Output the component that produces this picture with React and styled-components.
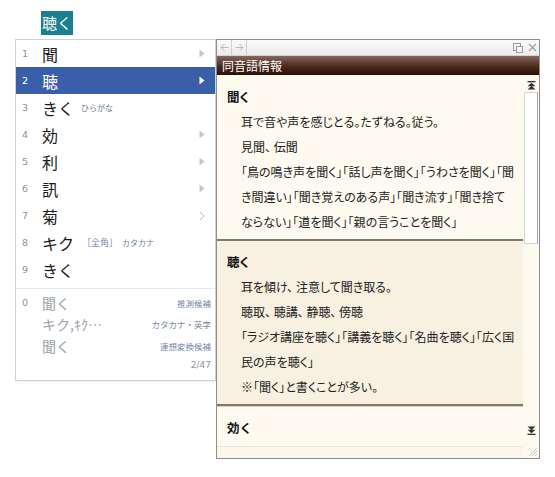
import styled, { createGlobalStyle } from "styled-components";

const GlobalStyle = createGlobalStyle`
  html, body {
    margin: 0;
    padding: 0;
    background: #fff;
  }
  body {
    font-family: "Noto Sans CJK JP", "Noto Sans", sans-serif;
    color: #222;
  }
`;

const candidates = [
  { num: 1, text: "聞", arrow: "solid" },
  { num: 2, text: "聴", arrow: "solid", selected: true },
  { num: 3, text: "きく", hint: "ひらがな" },
  { num: 4, text: "効", arrow: "solid" },
  { num: 5, text: "利", arrow: "solid" },
  { num: 6, text: "訊", arrow: "solid" },
  { num: 7, text: "菊", arrow: "open" },
  { num: 8, text: "キク", tag: "［全角］", hint: "カタカナ" },
  { num: 9, text: "きく" },
];

const extras = [
  { num: 0, text: "聞く", label: "推測候補" },
  { text: "キク,ｷｸ…", label: "カタカナ・英字" },
  { text: "聞く", label: "連想変換候補" },
];

const entries = [
  {
    word: "聞く",
    tone: "light",
    lines: [
      "耳で音や声を感じとる。たずねる。従う。",
      "見聞、 伝聞",
      "「鳥の鳴き声を聞く」「話し声を聞く」「うわさを聞く」「聞",
      "き間違い」「聞き覚えのある声」「聞き流す」「聞き捨て",
      "ならない」「道を聞く」「親の言うことを聞く」",
    ],
  },
  {
    word: "聴く",
    tone: "dark",
    lines: [
      "耳を傾け、 注意して聞き取る。",
      "聴取、 聴講、 静聴、 傍聴",
      "「ラジオ講座を聴く」「講義を聴く」「名曲を聴く」「広く国",
      "民の声を聴く」",
      "※「聞く」と書くことが多い。",
    ],
  },
];

const Page = styled.div`
  padding: 10px 0 0 15px;
  width: 540px;
`;

const Composition = styled.div`
  margin-left: 26px;
  display: inline-block;
  height: 24px;
  line-height: 24px;
  padding: 0 1px;
  background: #1b7f8e;
  color: #fff;
  font-size: 15px;
  margin-bottom: 4px;
`;

const Row = styled.div`
  display: flex;
  align-items: flex-start;
`;

const List = styled.div`
  width: 199px;
  border: 1px solid #cdd2d9;
  background: #fff;
  box-shadow: 1px 1px 2px rgba(0, 0, 0, 0.08);
  padding-bottom: 2px;
`;

const Candidate = styled.div`
  display: flex;
  align-items: center;
  height: 27px;
  padding: 0 10px 0 6px;
  background: ${(p) => (p.$selected ? "#3b5ea9" : "transparent")};
  color: ${(p) => (p.$selected ? "#fff" : "#1a1a1a")};
`;

const Num = styled.span`
  width: 20px;
  font-size: 9.5px;
  color: ${(p) => (p.$selected ? "#fff" : "#8592a6")};
  font-family: "DejaVu Sans", sans-serif;
`;

const Word = styled.span`
  font-size: 16px;
  line-height: 1;
`;

const Tag = styled.span`
  margin-left: 8px;
  font-size: 9px;
  color: #6f8db3;
`;

const Hint = styled.span`
  margin-left: ${(p) => (p.$tight ? "4px" : "7px")};
  font-size: 8px;
  color: #6e7c94;
`;

const Arrow = styled.span`
  margin-left: auto;
  display: flex;
  align-items: center;
`;

const Extras = styled.div`
  margin-top: 5px;
  border-top: 1px solid #e3e6ea;
  padding-top: 3px;
`;

const ExtraRow = styled.div`
  display: flex;
  align-items: center;
  height: 21.5px;
  padding: 0 4px 0 6px;
`;

const ExtraWord = styled.span`
  font-size: 14px;
  color: #9aa1aa;
`;

const ExtraLabel = styled.span`
  margin-left: auto;
  font-size: 8.5px;
  color: #7486a3;
`;

const Pager = styled.div`
  text-align: right;
  padding: 3px 4px 0 0;
  height: 18px;
  font-size: 9px;
  color: #8a95a6;
  font-family: "DejaVu Sans", sans-serif;
`;

const Panel = styled.div`
  width: 322px;
  height: 418px;
  border: 1px solid #8d8d8d;
  display: flex;
  flex-direction: column;
  background: #fffaf0;
  position: relative;
`;

const Toolbar = styled.div`
  height: 15px;
  display: flex;
  align-items: center;
  background: linear-gradient(#fafafa, #ececec);
  border-bottom: 1px solid #d2d2d2;
`;

const ToolButton = styled.span`
  width: 14px;
  height: 15px;
  display: flex;
  align-items: center;
  justify-content: center;
  border-right: ${(p) => (p.$sep ? "1px solid #d0d0d0" : "none")};
  margin-left: ${(p) => (p.$push ? "auto" : "0")};
`;

const TitleBar = styled.div`
  height: 19px;
  line-height: 19px;
  padding-left: 5px;
  font-size: 12px;
  color: #fff;
  background: linear-gradient(#86675a, #4a2a1f 55%, #2b0f06);
`;

const Body = styled.div`
  flex: 1;
  display: flex;
  min-height: 0;
`;

const Entries = styled.div`
  flex: 1;
  display: flex;
  flex-direction: column;
`;

const Entry = styled.div`
  padding: ${(p) => (p.$first ? "10px" : "9px")} 0 5px 10px;
  background: ${(p) => (p.$tone === "dark" ? "#f8f0e0" : "#fffaf0")};
  border-bottom: 2px solid #867766;
  box-shadow: 0 1px 0 #d9cfc2;
  font-feature-settings: "palt";
`;

const Heading = styled.div`
  font-weight: bold;
  font-size: 12.5px;
  line-height: 24px;
  color: #111;
`;

const Line = styled.div`
  margin-left: 14px;
  font-size: 12px;
  line-height: 25px;
  white-space: pre;
  color: #222;
`;

const LastEntry = styled.div`
  padding: 9px 0 6px 10px;
  border-bottom: 1px solid #ede5d6;
  margin-top: 1px;
`;

const Filler = styled.div`
  flex: 1;
  background: #fdf6ea;
`;

const Scrollbar = styled.div`
  width: 16px;
  display: flex;
  flex-direction: column;
  align-items: center;
  padding: 6px 0 0;
`;

const Thumb = styled.div`
  width: 12px;
  height: 150px;
  margin-top: 2px;
  background: #fff;
  border: 1px solid #d4d4d4;
  border-right-color: #a9a9a9;
`;

const ScrollDown = styled.div`
  margin-top: auto;
  margin-bottom: 18px;
`;

const Grip = styled.svg`
  position: absolute;
  right: 1px;
  bottom: 1px;
`;

function TriangleRight({ color }) {
  return (
    <svg width="6" height="9" viewBox="0 0 6 9">
      <path d="M0.5 0.5 L5.5 4.5 L0.5 8.5 Z" fill={color} />
    </svg>
  );
}

function ChevronRight() {
  return (
    <svg width="6" height="10" viewBox="0 0 6 10">
      <path d="M0.8 0.8 L5 5 L0.8 9.2" fill="none" stroke="#b4bac4" strokeWidth="1" />
    </svg>
  );
}

function DoubleArrow({ down }) {
  return (
    <svg width="9" height="9" viewBox="0 0 9 9" style={down ? { transform: "scaleY(-1)" } : undefined}>
      <rect x="0.5" y="0" width="8" height="1.3" fill="#333" />
      <path d="M4.5 1.8 L8.5 5.2 L0.5 5.2 Z" fill="#333" />
      <path d="M4.5 4.8 L8.5 8.5 L0.5 8.5 Z" fill="#333" />
    </svg>
  );
}

function NavArrow({ right }) {
  return (
    <svg width="9" height="9" viewBox="0 0 9 9" style={right ? { transform: "scaleX(-1)" } : undefined}>
      <path d="M8.5 4.5 H1 M4.5 1 L1 4.5 L4.5 8" fill="none" stroke="#b9b9b9" strokeWidth="1" />
    </svg>
  );
}

function RestoreIcon() {
  return (
    <svg width="10" height="10" viewBox="0 0 10 10">
      <rect x="0.5" y="0.5" width="7" height="7" fill="none" stroke="#9a9a9a" />
      <rect x="3.5" y="3.5" width="6" height="6" fill="#f4f4f4" stroke="#9a9a9a" />
    </svg>
  );
}

function CloseIcon() {
  return (
    <svg width="9" height="9" viewBox="0 0 9 9">
      <path d="M1 1 L8 8 M8 1 L1 8" stroke="#9a9a9a" strokeWidth="1.1" />
    </svg>
  );
}

function CandidateList() {
  return (
    <List>
      {candidates.map((c) => (
        <Candidate key={c.num} $selected={c.selected}>
          <Num $selected={c.selected}>{c.num}</Num>
          <Word>{c.text}</Word>
          {c.tag && <Tag>{c.tag}</Tag>}
          {c.hint && <Hint $tight={!!c.tag}>{c.hint}</Hint>}
          {c.arrow && (
            <Arrow>
              {c.arrow === "open" ? (
                <ChevronRight />
              ) : (
                <TriangleRight color={c.selected ? "#fff" : "#c3c8d0"} />
              )}
            </Arrow>
          )}
        </Candidate>
      ))}
      <Extras>
        {extras.map((e, i) => (
          <ExtraRow key={i}>
            <Num>{e.num ?? ""}</Num>
            <ExtraWord>{e.text}</ExtraWord>
            <ExtraLabel>{e.label}</ExtraLabel>
          </ExtraRow>
        ))}
        <Pager>2/47</Pager>
      </Extras>
    </List>
  );
}

function InfoPanel() {
  return (
    <Panel>
      <Toolbar>
        <ToolButton $sep>
          <NavArrow />
        </ToolButton>
        <ToolButton $sep>
          <NavArrow right />
        </ToolButton>
        <ToolButton $push>
          <RestoreIcon />
        </ToolButton>
        <ToolButton>
          <CloseIcon />
        </ToolButton>
      </Toolbar>
      <TitleBar>同音語情報</TitleBar>
      <Body>
        <Entries>
          {entries.map((e, i) => (
            <Entry key={e.word} $tone={e.tone} $first={i === 0}>
              <Heading>{e.word}</Heading>
              {e.lines.map((l) => (
                <Line key={l}>{l}</Line>
              ))}
            </Entry>
          ))}
          <LastEntry>
            <Heading>効く</Heading>
          </LastEntry>
          <Filler />
        </Entries>
        <Scrollbar>
          <DoubleArrow />
          <Thumb />
          <ScrollDown>
            <DoubleArrow down />
          </ScrollDown>
        </Scrollbar>
      </Body>
      <Grip width="12" height="12" viewBox="0 0 12 12">
        <path d="M11 3 L3 11 M11 6 L6 11 M11 9 L9 11" stroke="#c4c4c4" strokeWidth="1" />
      </Grip>
    </Panel>
  );
}

export default function App() {
  return (
    <>
      <GlobalStyle />
      <Page>
        <Composition>聴く</Composition>
        <Row>
          <CandidateList />
          <InfoPanel />
        </Row>
      </Page>
    </>
  );
}
